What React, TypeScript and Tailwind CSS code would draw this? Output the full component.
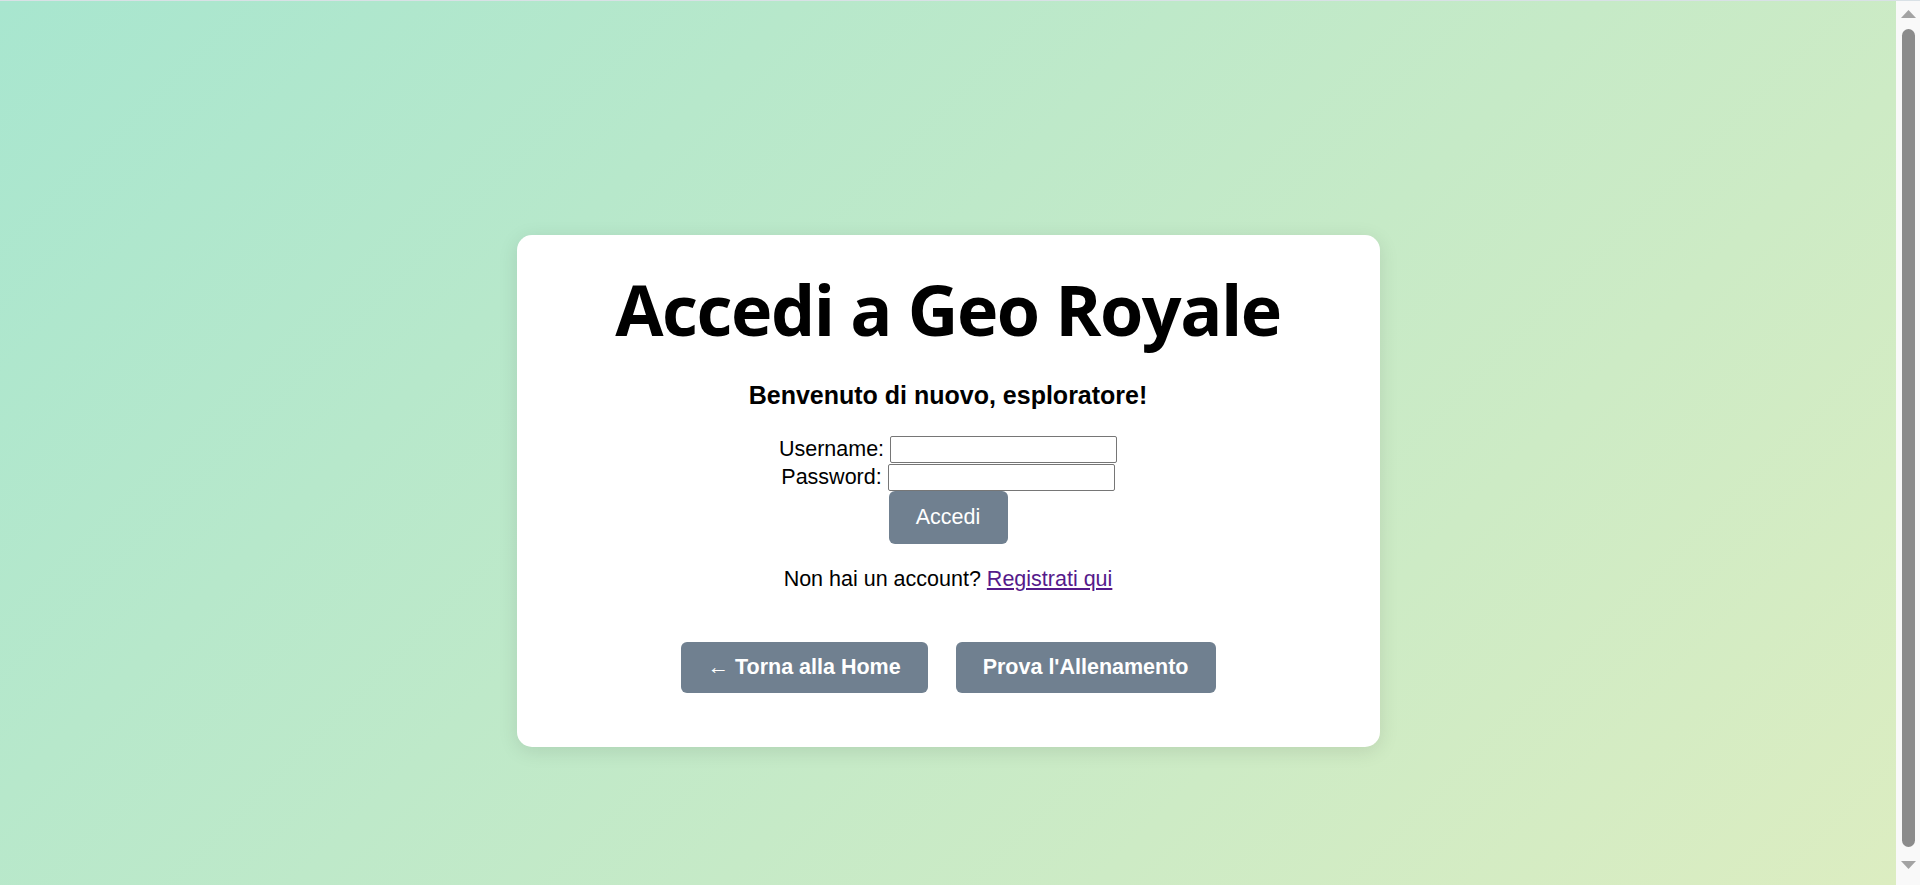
import { useState } from "react";

const btn =
  "h-[51px] rounded-[6px] bg-[#708090] px-[27px] text-[21.5px] font-bold text-white leading-[25px]";

const field =
  "h-[27px] w-[227px] rounded-[2px] border border-[#767676] bg-white px-1 text-[13px]";

export default function App() {
  const [username, setUsername] = useState("");
  const [password, setPassword] = useState("");

  return (
    <div className="flex h-screen overflow-hidden border-t border-[#d9e1e6] font-['Liberation_Sans',Arial,sans-serif] text-black">
      <main className="flex flex-1 justify-center bg-[linear-gradient(135deg,#a8e6cf,#dcedc1)] pt-[234px]">
        <div className="flex h-fit w-[863px] flex-col items-center rounded-[15px] bg-white pt-[38px] pb-[54px] shadow-[0_4px_20px_rgba(0,0,0,0.1)]">
          <h1 className="font-['Comic_Sans_MS','Open_Sans',sans-serif] text-[70px] font-bold leading-[72px] tracking-[-1.5px]">
            Accedi a Geo Royale
          </h1>

          <h2 className="mt-[36px] text-[25px] font-bold leading-[28px]">
            Benvenuto di nuovo, esploratore!
          </h2>

          <form
            className="mt-[26px] flex flex-col items-center text-[21.5px] leading-[25px]"
            onSubmit={(e) => e.preventDefault()}
          >
            <div className="flex h-[28px] items-center gap-[6px]">
              <label htmlFor="username">Username:</label>
              <input
                id="username"
                value={username}
                onChange={(e) => setUsername(e.target.value)}
                className={field}
              />
            </div>
            <div className="flex h-[28px] items-center gap-[6px]">
              <label htmlFor="password">Password:</label>
              <input
                id="password"
                type="password"
                value={password}
                onChange={(e) => setPassword(e.target.value)}
                className={field}
              />
            </div>
            <button
              type="submit"
              className="h-[53px] w-[119px] rounded-[6px] bg-[#708090] text-white"
            >
              Accedi
            </button>
          </form>

          <p className="mt-[23px] text-[21.5px] leading-[25px]">
            Non hai un account?{" "}
            <a href="#" className="text-[#551a8b] underline">
              Registrati qui
            </a>
          </p>

          <div className="mt-[50px] flex gap-[28px]">
            <button className={btn}>← Torna alla Home</button>
            <button className={btn}>Prova l'Allenamento</button>
          </div>
        </div>
      </main>

      {/* fake scrollbar, as in the screenshot */}
      <aside className="flex w-[24px] flex-col items-center bg-[#f9f9f9] pt-[9px] pb-[16px]">
        <svg width="15" height="8" viewBox="0 0 15 8" className="shrink-0">
          <path d="M7.5 0L15 8H0z" fill="#a3a3a3" />
        </svg>
        <div className="mt-[11px] mb-[14px] w-[13px] flex-1 rounded-full bg-[#8b8b8b]" />
        <svg width="15" height="8" viewBox="0 0 15 8" className="shrink-0">
          <path d="M0 0h15L7.5 8z" fill="#a3a3a3" />
        </svg>
      </aside>
    </div>
  );
}
